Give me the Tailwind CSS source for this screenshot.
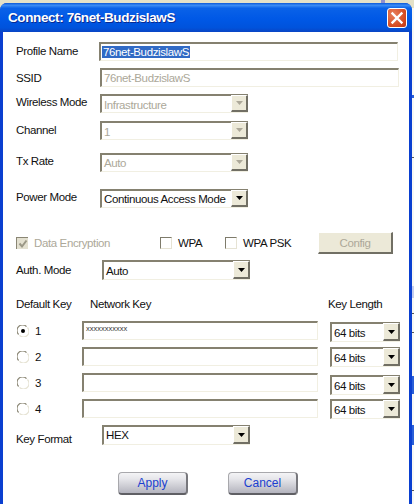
<!DOCTYPE html>
<html lang="en">
<head>
  <meta charset="UTF-8">
  <title>Connect: 76net-BudzislawS</title>
  <script src="https://cdn.jsdelivr.net/npm/@tailwindcss/browser@4"></script>
</head>
<body class="relative w-[414px] h-[504px] overflow-hidden bg-[#f7f7f4] font-['Liberation_Sans',sans-serif] text-[11.5px] tracking-[-0.38px] leading-[14px] text-[#111]">
  <!-- bits of the desktop behind the dialog -->
  <div class="absolute left-0 right-0 top-0 h-[8px] bg-[#e4e1c8]"></div>
  <div class="absolute left-[381px] top-0 w-[4px] h-[3px] bg-[#8f8fd0]"></div>
  <div class="absolute right-0 top-[95px] w-[2px] h-[3px] bg-[#2a5fd8]"></div>
  <div class="absolute right-0 top-[157px] w-[2px] h-[1px] bg-[#555]"></div>
  <div class="absolute right-0 top-[286px] w-[2px] h-[12px] bg-[#c4cdf0]"></div>
  <div class="absolute right-0 top-[313px] w-[2px] h-[1px] bg-[#555]"></div>
  <div class="absolute right-0 top-[332px] w-[2px] h-[1px] bg-[#555]"></div>
  <div class="absolute right-0 top-[376px] w-[2px] h-[18px] bg-[#2a5fd8]"></div>
  <div class="absolute right-0 top-[425px] w-[2px] h-[20px] bg-[#2a5fd8]"></div>
  <div class="absolute right-0 top-[490px] w-[2px] h-[1px] bg-[#555]"></div>

  <div class="relative w-[412px] h-[504px] pt-[3px]">
    <div class="flex flex-col h-[501px] rounded-t-[7px] bg-[#0a3fd0] pl-[3px] pr-[3px] overflow-hidden">
      <!-- title bar -->
      <div class="flex items-center justify-between h-[29px] -mx-[3px] pl-[8px] pr-[5px] bg-[linear-gradient(180deg,#0a58d8_0%,#3b8cf5_8%,#0a62e8_18%,#0058e6_55%,#0053dc_85%,#0a44c4_100%)]">
        <span class="font-bold text-[13.5px] tracking-[-0.4px] text-white [text-shadow:1px_1px_0_#0a2a90]">Connect: 76net-BudzislawS</span>
        <div class="flex items-center justify-center w-[20px] h-[20px] rounded-[3px] border border-white bg-[radial-gradient(circle_at_30%_30%,#e8805c,#d4481f_70%,#b8381a)]">
          <svg width="14" height="14" viewBox="0 0 14 14"><path d="M2.5 2.5 L11.5 11.5 M11.5 2.5 L2.5 11.5" stroke="#fff" stroke-width="2.4" stroke-linecap="square"/></svg>
        </div>
      </div>

      <!-- form -->
      <div class="flex-1 bg-white pl-[13px]">
        <div class="flex mt-[10px] h-[19px]">
          <div class="w-[83px] pt-[2px]">Profile Name</div>
          <div class="w-[299px] h-[19px] pl-[1px] pt-[1px] border-t-2 border-l-2 border-r border-b border-t-[#858170] border-l-[#858170] border-r-[#f1efe2] border-b-[#f1efe2]"><span class="bg-[#316ac5] text-white px-[1px]">76net-BudzislawS</span></div>
        </div>
        <div class="flex mt-[7px] h-[19px]">
          <div class="w-[84px] pt-[3px]">SSID</div>
          <div class="w-[299px] h-[19px] pl-[2px] pt-[1px] text-[#aca899] border-t-2 border-l-2 border-r border-b border-t-[#858170] border-l-[#858170] border-r-[#f1efe2] border-b-[#f1efe2]">76net-BudzislawS</div>
        </div>
        <div class="flex mt-[7px] h-[19px]">
          <div class="w-[84px] pt-[1px]">Wireless Mode</div>
          <div class="flex w-[148px] h-[19px] border-t-2 border-l-2 border-b border-t-[#858170] border-l-[#858170] border-b-[#f1efe2]">
            <div class="flex-1 pl-[2px] pt-[2px] text-[#aca899]">Infrastructure</div>
            <div class="flex items-center justify-center w-[17px] h-[17px] -mt-[1px] bg-[#ece9d8] border-t border-l border-white border-r-2 border-b-2 border-r-[#716f64] border-b-[#716f64]"><svg width="7" height="4" viewBox="0 0 7 4"><polygon points="0,0 7,0 3.5,4" fill="#aca899"/></svg></div>
          </div>
        </div>
        <div class="flex mt-[8px] h-[19px]">
          <div class="w-[84px] pt-[2px]">Channel</div>
          <div class="flex w-[148px] h-[19px] border-t-2 border-l-2 border-b border-t-[#858170] border-l-[#858170] border-b-[#f1efe2]">
            <div class="flex-1 pl-[2px] pt-[2px] text-[#aca899]">1</div>
            <div class="flex items-center justify-center w-[17px] h-[17px] -mt-[1px] bg-[#ece9d8] border-t border-l border-white border-r-2 border-b-2 border-r-[#716f64] border-b-[#716f64]"><svg width="7" height="4" viewBox="0 0 7 4"><polygon points="0,0 7,0 3.5,4" fill="#aca899"/></svg></div>
          </div>
        </div>
        <div class="flex mt-[13px] h-[19px]">
          <div class="w-[84px] pt-[1px]">Tx Rate</div>
          <div class="flex w-[148px] h-[19px] border-t-2 border-l-2 border-b border-t-[#858170] border-l-[#858170] border-b-[#f1efe2]">
            <div class="flex-1 pl-[2px] pt-[1px] text-[#aca899]">Auto</div>
            <div class="flex items-center justify-center w-[17px] h-[17px] -mt-[1px] bg-[#ece9d8] border-t border-l border-white border-r-2 border-b-2 border-r-[#716f64] border-b-[#716f64]"><svg width="7" height="4" viewBox="0 0 7 4"><polygon points="0,0 7,0 3.5,4" fill="#aca899"/></svg></div>
          </div>
        </div>
        <div class="flex mt-[17px] h-[19px]">
          <div class="w-[84px] pt-[1px]">Power Mode</div>
          <div class="flex w-[148px] h-[19px] border-t-2 border-l-2 border-b border-t-[#858170] border-l-[#858170] border-b-[#f1efe2]">
            <div class="flex-1 pl-[2px] pt-[1px] whitespace-nowrap">Continuous Access Mode</div>
            <div class="flex items-center justify-center w-[17px] h-[17px] -mt-[1px] bg-[#ece9d8] border-t border-l border-white border-r-2 border-b-2 border-r-[#716f64] border-b-[#716f64]"><svg width="7" height="4" viewBox="0 0 7 4"><polygon points="0,0 7,0 3.5,4" fill="#000"/></svg></div>
          </div>
        </div>

        <!-- encryption options -->
        <div class="flex items-center mt-[24px] h-[22px]">
          <div class="flex items-center w-[144px] text-[#aca899]">
            <div class="flex items-center justify-center w-[12px] h-[12px] mr-[6px] bg-[#e3e0d0] border-t border-l border-[#8a8674]"><svg width="10" height="10" viewBox="0 0 10 10"><path d="M1.5 4.5 L4 7.5 L8.5 1.5" fill="none" stroke="#9a9786" stroke-width="2"/></svg></div>
            Data Encryption
          </div>
          <div class="flex items-center w-[65px]">
            <div class="w-[12px] h-[12px] mr-[6px] bg-white border-t border-l border-b border-r border-t-[#7e7b6b] border-l-[#7e7b6b] border-b-[#e6e3d4] border-r-[#e6e3d4]"></div>
            WPA
          </div>
          <div class="flex items-center w-[93px]">
            <div class="w-[12px] h-[12px] mr-[6px] bg-white border-t border-l border-b border-r border-t-[#7e7b6b] border-l-[#7e7b6b] border-b-[#e6e3d4] border-r-[#e6e3d4]"></div>
            WPA PSK
          </div>
          <div class="flex items-center justify-center w-[75px] h-[22px] bg-[#ece9d8] text-[#aca899] border-t border-l border-white border-r-2 border-b-2 border-r-[#716f64] border-b-[#716f64]">Config</div>
        </div>
        <div class="flex mt-[6px] h-[20px]">
          <div class="w-[86px] pt-[3px]">Auth. Mode</div>
          <div class="flex w-[148px] h-[20px] border-t-2 border-l-2 border-b border-t-[#858170] border-l-[#858170] border-b-[#f1efe2]">
            <div class="flex-1 pl-[2px] pt-[2px]">Auto</div>
            <div class="flex items-center justify-center w-[17px] h-[18px] -mt-[1px] bg-[#ece9d8] border-t border-l border-white border-r-2 border-b-2 border-r-[#716f64] border-b-[#716f64]"><svg width="7" height="4" viewBox="0 0 7 4"><polygon points="0,0 7,0 3.5,4" fill="#000"/></svg></div>
          </div>
        </div>

        <!-- wep keys -->
        <div class="flex mt-[17px] h-[14px]">
          <div class="w-[74px]">Default Key</div>
          <div class="w-[238px]">Network Key</div>
          <div>Key Length</div>
        </div>
        <div class="flex mt-[10px] h-[19px]">
          <div class="flex items-center w-[66px] pl-[1px]">
            <svg class="mr-[6px]" width="12" height="12" viewBox="0 0 12 12"><circle cx="6" cy="6" r="5.5" fill="#fff"/><path d="M1.6 9.5 A5.5 5.5 0 0 1 9.5 1.6" fill="none" stroke="#8a8674" stroke-width="1.2"/><path d="M10.4 2.5 A5.5 5.5 0 0 1 2.5 10.4" fill="none" stroke="#e6e3d4" stroke-width="1.2"/><circle cx="6" cy="6" r="2" fill="#000"/></svg>
            1
          </div>
          <div class="w-[236px] h-[19px] pl-[2px] leading-[11px] text-[7.5px] tracking-[0px] text-[#333] border-t-2 border-l-2 border-r border-b border-t-[#858170] border-l-[#858170] border-r-[#f1efe2] border-b-[#f1efe2]">xxxxxxxxxxx</div>
          <div class="flex w-[70px] h-[20px] ml-[12px] mt-[1px] border-t-2 border-l-2 border-b border-t-[#858170] border-l-[#858170] border-b-[#f1efe2]">
            <div class="flex-1 pl-[2px] pt-[2px]">64 bits</div>
            <div class="flex items-center justify-center w-[17px] h-[18px] -mt-[1px] bg-[#ece9d8] border-t border-l border-white border-r-2 border-b-2 border-r-[#716f64] border-b-[#716f64]"><svg width="7" height="4" viewBox="0 0 7 4"><polygon points="0,0 7,0 3.5,4" fill="#000"/></svg></div>
          </div>
        </div>
        <div class="flex mt-[7px] h-[19px]">
          <div class="flex items-center w-[66px] pl-[1px]">
            <svg class="mr-[6px]" width="12" height="12" viewBox="0 0 12 12"><circle cx="6" cy="6" r="5.5" fill="#fff"/><path d="M1.6 9.5 A5.5 5.5 0 0 1 9.5 1.6" fill="none" stroke="#8a8674" stroke-width="1.2"/><path d="M10.4 2.5 A5.5 5.5 0 0 1 2.5 10.4" fill="none" stroke="#e6e3d4" stroke-width="1.2"/></svg>
            2
          </div>
          <div class="w-[236px] h-[19px] border-t-2 border-l-2 border-r border-b border-t-[#858170] border-l-[#858170] border-r-[#f1efe2] border-b-[#f1efe2]"></div>
          <div class="flex w-[70px] h-[20px] ml-[12px] border-t-2 border-l-2 border-b border-t-[#858170] border-l-[#858170] border-b-[#f1efe2]">
            <div class="flex-1 pl-[2px] pt-[2px]">64 bits</div>
            <div class="flex items-center justify-center w-[17px] h-[18px] -mt-[1px] bg-[#ece9d8] border-t border-l border-white border-r-2 border-b-2 border-r-[#716f64] border-b-[#716f64]"><svg width="7" height="4" viewBox="0 0 7 4"><polygon points="0,0 7,0 3.5,4" fill="#000"/></svg></div>
          </div>
        </div>
        <div class="flex mt-[7px] h-[19px]">
          <div class="flex items-center w-[66px] pl-[1px]">
            <svg class="mr-[6px]" width="12" height="12" viewBox="0 0 12 12"><circle cx="6" cy="6" r="5.5" fill="#fff"/><path d="M1.6 9.5 A5.5 5.5 0 0 1 9.5 1.6" fill="none" stroke="#8a8674" stroke-width="1.2"/><path d="M10.4 2.5 A5.5 5.5 0 0 1 2.5 10.4" fill="none" stroke="#e6e3d4" stroke-width="1.2"/></svg>
            3
          </div>
          <div class="w-[236px] h-[19px] border-t-2 border-l-2 border-r border-b border-t-[#858170] border-l-[#858170] border-r-[#f1efe2] border-b-[#f1efe2]"></div>
          <div class="flex w-[70px] h-[20px] ml-[12px] mt-[2px] border-t-2 border-l-2 border-b border-t-[#858170] border-l-[#858170] border-b-[#f1efe2]">
            <div class="flex-1 pl-[2px] pt-[2px]">64 bits</div>
            <div class="flex items-center justify-center w-[17px] h-[18px] -mt-[1px] bg-[#ece9d8] border-t border-l border-white border-r-2 border-b-2 border-r-[#716f64] border-b-[#716f64]"><svg width="7" height="4" viewBox="0 0 7 4"><polygon points="0,0 7,0 3.5,4" fill="#000"/></svg></div>
          </div>
        </div>
        <div class="flex mt-[7px] h-[19px]">
          <div class="flex items-center w-[66px] pl-[1px]">
            <svg class="mr-[6px]" width="12" height="12" viewBox="0 0 12 12"><circle cx="6" cy="6" r="5.5" fill="#fff"/><path d="M1.6 9.5 A5.5 5.5 0 0 1 9.5 1.6" fill="none" stroke="#8a8674" stroke-width="1.2"/><path d="M10.4 2.5 A5.5 5.5 0 0 1 2.5 10.4" fill="none" stroke="#e6e3d4" stroke-width="1.2"/></svg>
            4
          </div>
          <div class="w-[236px] h-[19px] border-t-2 border-l-2 border-r border-b border-t-[#858170] border-l-[#858170] border-r-[#f1efe2] border-b-[#f1efe2]"></div>
          <div class="flex w-[70px] h-[20px] ml-[12px] border-t-2 border-l-2 border-b border-t-[#858170] border-l-[#858170] border-b-[#f1efe2]">
            <div class="flex-1 pl-[2px] pt-[2px]">64 bits</div>
            <div class="flex items-center justify-center w-[17px] h-[18px] -mt-[1px] bg-[#ece9d8] border-t border-l border-white border-r-2 border-b-2 border-r-[#716f64] border-b-[#716f64]"><svg width="7" height="4" viewBox="0 0 7 4"><polygon points="0,0 7,0 3.5,4" fill="#000"/></svg></div>
          </div>
        </div>
        <div class="flex mt-[7px] h-[20px]">
          <div class="w-[86px] pt-[7px]">Key Format</div>
          <div class="flex w-[148px] h-[20px] border-t-2 border-l-2 border-b border-t-[#858170] border-l-[#858170] border-b-[#f1efe2]">
            <div class="flex-1 pl-[2px] pt-[1px]">HEX</div>
            <div class="flex items-center justify-center w-[17px] h-[18px] -mt-[1px] bg-[#ece9d8] border-t border-l border-white border-r-2 border-b-2 border-r-[#716f64] border-b-[#716f64]"><svg width="7" height="4" viewBox="0 0 7 4"><polygon points="0,0 7,0 3.5,4" fill="#000"/></svg></div>
          </div>
        </div>

        <!-- buttons -->
        <div class="flex mt-[27px] ml-[102px] gap-[40px]">
          <div class="flex items-center justify-center w-[70px] h-[23px] rounded-[4px] border border-[#a8a8ac] border-b-2 border-b-[#5f5f64] border-r-2 border-r-[#77777c] bg-[linear-gradient(180deg,#f4f4f6_0%,#e6e6ea_30%,#b4b4be_100%)] text-[#1a3fd0] text-[12px] tracking-[0px]">Apply</div>
          <div class="flex items-center justify-center w-[70px] h-[23px] rounded-[4px] border border-[#a8a8ac] border-b-2 border-b-[#5f5f64] border-r-2 border-r-[#77777c] bg-[linear-gradient(180deg,#f4f4f6_0%,#e6e6ea_30%,#b4b4be_100%)] text-[#1a3fd0] text-[12px] tracking-[0px]">Cancel</div>
        </div>
      </div>
    </div>
  </div>
</body>
</html>
